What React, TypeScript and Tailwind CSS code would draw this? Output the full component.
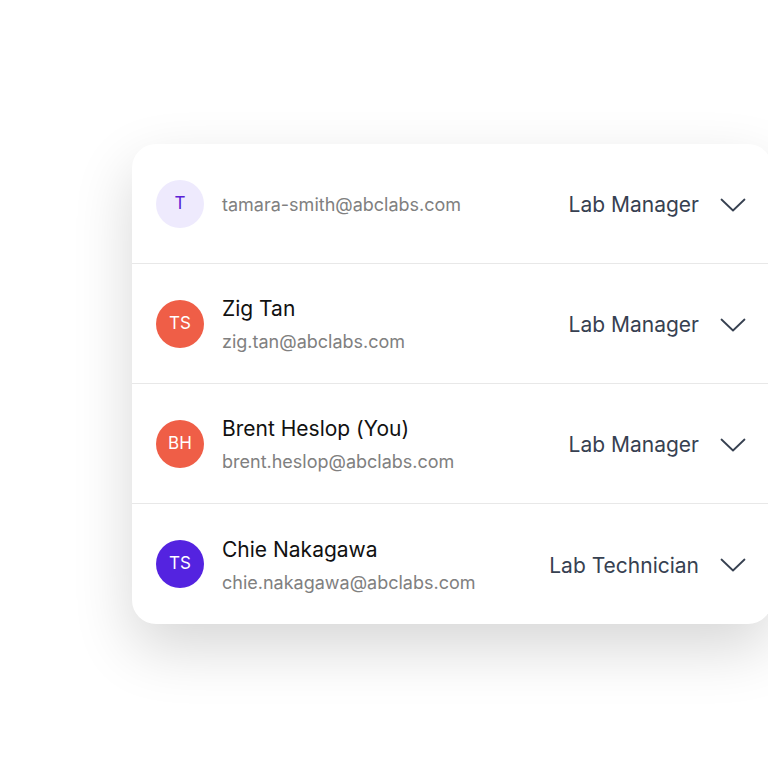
import React from "react";

interface Member {
  initials: string;
  name?: string;
  email: string;
  role: string;
  avatarClass: string;
}

const members: Member[] = [
  {
    initials: "T",
    email: "tamara-smith@abclabs.com",
    role: "Lab Manager",
    avatarClass: "bg-[#eeeafd] text-[#5b21d6]",
  },
  {
    initials: "TS",
    name: "Zig Tan",
    email: "zig.tan@abclabs.com",
    role: "Lab Manager",
    avatarClass: "bg-[#ef5e47] text-white",
  },
  {
    initials: "BH",
    name: "Brent Heslop (You)",
    email: "brent.heslop@abclabs.com",
    role: "Lab Manager",
    avatarClass: "bg-[#ef5e47] text-white",
  },
  {
    initials: "TS",
    name: "Chie Nakagawa",
    email: "chie.nakagawa@abclabs.com",
    role: "Lab Technician",
    avatarClass: "bg-[#5423e0] text-white",
  },
];

const Chevron = () => (
  <svg width="26" height="16" viewBox="0 0 26 16" fill="none" className="text-[#374151]">
    <path d="M1.5 2.5L13 13.5L24.5 2.5" stroke="currentColor" strokeWidth="1.8" strokeLinecap="round" strokeLinejoin="round" />
  </svg>
);

const App: React.FC = () => {
  return (
    <div className="w-[768px] h-[768px] overflow-hidden bg-white font-['Inter',sans-serif]">
      <div className="pt-[144px] pl-[132px]">
        {/* 카드 */}
        <div className="w-[640px] bg-white rounded-[24px] shadow-[0_24px_60px_rgba(0,0,0,0.16)]">
          {members.map((m, idx) => (
            <div
              key={idx}
              className={`h-[120px] flex items-center pl-6 pr-[26px] ${
                idx < members.length - 1 ? "border-b border-[#e8e8e8]" : ""
              }`}
            >
              <div
                className={`w-12 h-12 rounded-full flex items-center justify-center text-[17px] shrink-0 ${m.avatarClass}`}
              >
                {m.initials}
              </div>
              <div className="ml-[18px] flex-1 flex flex-col pt-[2px]">
                {m.name && <p className="text-[21px] leading-7 text-[#111111]">{m.name}</p>}
                <p className={`text-[18px] leading-6 text-[#808080] ${m.name ? "mt-[7px]" : ""}`}>{m.email}</p>
              </div>
              <span className="text-[21px] text-[#374151] pt-[3px]">{m.role}</span>
              <div className="ml-[21px] flex items-center pt-[2px]">
                <Chevron />
              </div>
            </div>
          ))}
        </div>
      </div>
    </div>
  );
};

export default App;
